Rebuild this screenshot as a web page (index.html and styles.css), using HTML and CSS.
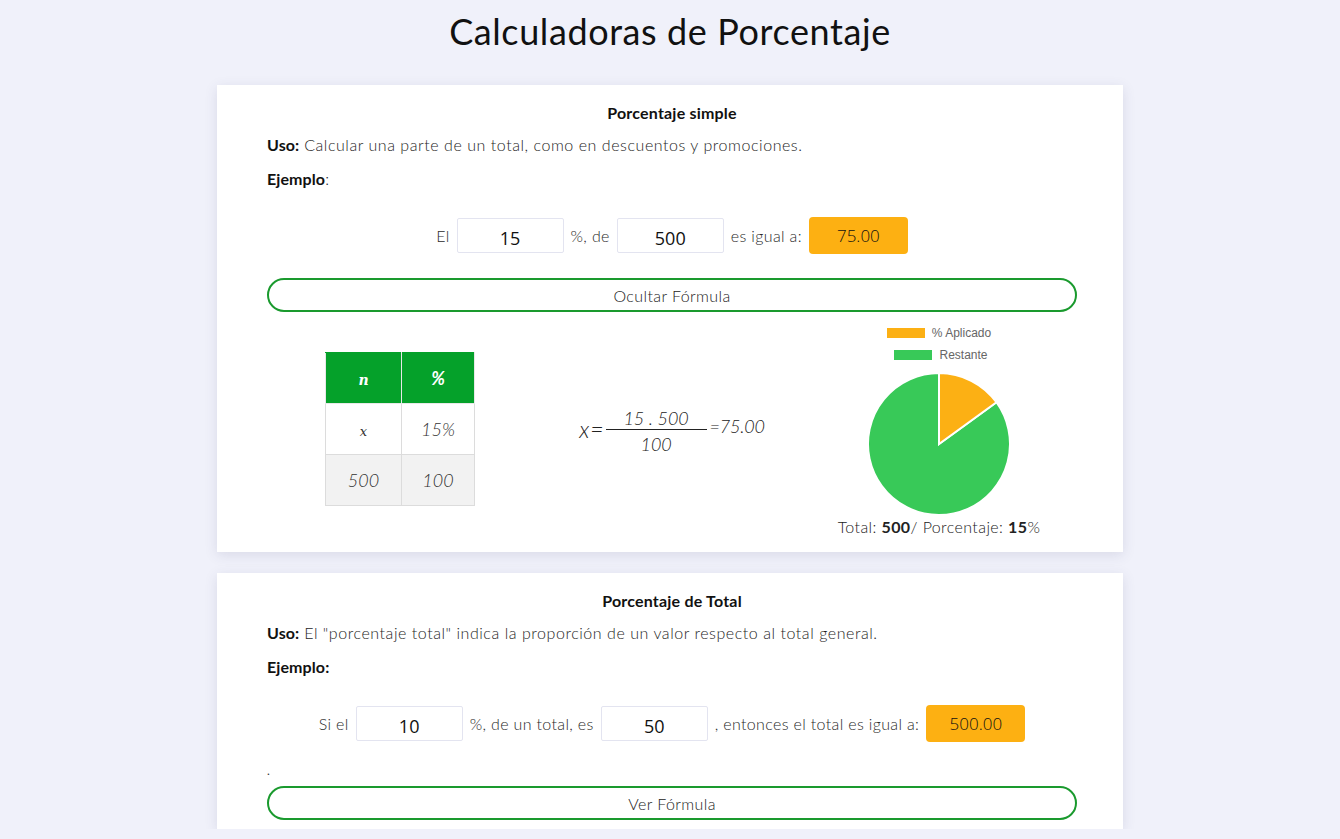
FILE: index.html
```html
<!DOCTYPE html>
<html lang="es">
<head>
<meta charset="utf-8">
<title>Calculadoras de Porcentaje</title>
<link rel="stylesheet" href="styles.css">
</head>
<body>
<h1 class="page-title">Calculadoras de Porcentaje</h1>

<section class="card card-first">
  <h2 class="card-title">Porcentaje simple</h2>
  <p class="line"><strong>Uso:</strong> Calcular una parte de un total, como en descuentos y promociones.</p>
  <p class="line line-ex"><strong>Ejemplo</strong>:</p>
  <div class="calc-row">
    <span>El</span>
    <input class="num" type="text" value="15">
    <span>%, de</span>
    <input class="num" type="text" value="500">
    <span>es igual a:</span>
    <span class="result">75.00</span>
  </div>
  <button class="toggle">Ocultar Fórmula</button>
  <div class="formula">
    <div class="col col-table">
      <table class="rule">
        <tr class="head"><th><span class="math-n">n</span></th><th>%</th></tr>
        <tr><td><span class="math-x">x</span></td><td>15%</td></tr>
        <tr class="alt"><td>500</td><td>100</td></tr>
      </table>
    </div>
    <div class="col col-eq">
      <div class="eq">
        <span class="eq-x">x=</span>
        <span class="frac"><span class="num-top">15 . 500</span><span class="den">100</span></span>
        <span class="eq-r">=75.00</span>
      </div>
    </div>
    <div class="col col-chart">
      <div class="legend">
        <div class="lg-item"><span class="sw sw-o"></span>% Aplicado</div>
        <div class="lg-item lg-2"><span class="sw sw-g"></span>Restante</div>
      </div>
      <svg class="pie" width="146" height="146" viewBox="-2 -2 146 146">
        <path d="M71 71 L128.44 29.27 A71 71 0 1 1 71 0 Z" fill="#38c958" stroke="#fff" stroke-width="2"/>
        <path d="M71 71 L71 0 A71 71 0 0 1 128.44 29.27 Z" fill="#fcb014" stroke="#fff" stroke-width="2"/>
      </svg>
      <p class="caption">Total: <b>500</b>/ Porcentaje: <b>15</b>%</p>
    </div>
  </div>
</section>

<section class="card card-second">
  <h2 class="card-title">Porcentaje de Total</h2>
  <p class="line"><strong>Uso:</strong> El "porcentaje total" indica la proporción de un valor respecto al total general.</p>
  <p class="line line-ex"><strong>Ejemplo:</strong></p>
  <div class="calc-row">
    <span>Si el</span>
    <input class="num" type="text" value="10">
    <span>%, de un total, es</span>
    <input class="num" type="text" value="50">
    <span>, entonces el total es igual a:</span>
    <span class="result">500.00</span>
  </div>
  <p class="dot">.</p>
  <button class="toggle toggle-2">Ver Fórmula</button>
</section>
</body>
</html>
```

FILE: styles.css
```css
* { box-sizing: border-box; }

body {
  margin: 0;
  background: #f0f1fa;
  font-family: "Lato", "Open Sans", sans-serif;
  color: #222;
}

.page-title {
  margin: 0;
  padding-top: 9px;
  height: 85px;
  text-align: center;
  font-size: 36px;
  font-weight: 400;
  line-height: 44px;
  color: #111;
  letter-spacing: 0.6px;
}

.card {
  width: 906px;
  margin: 0 auto;
  background: #fff;
  box-shadow: 0 3px 12px rgba(60, 60, 110, 0.13);
  padding: 18px 46px 15px 50px;
}

.card-second {
  margin-top: 21px;
  padding-bottom: 9px;
}

.card-title {
  margin: 0;
  text-align: center;
  font-size: 16px;
  line-height: 19px;
  font-weight: 700;
  color: #111;
  letter-spacing: 0.2px;
}

.line {
  margin: 13px 0 0;
  font-size: 16px;
  line-height: 20px;
  font-weight: 300;
  color: #1e1e1e;
  letter-spacing: 0.55px;
}

.line strong { font-weight: 700; color: #111; letter-spacing: 0.1px; }

.line-ex { margin-top: 14px; }

.calc-row {
  margin-top: 28px;
  display: flex;
  justify-content: center;
  align-items: center;
  gap: 6px;
  font-size: 16px;
  font-weight: 300;
  color: #2a2a2a;
  letter-spacing: 0.35px;
}

.num {
  width: 107px;
  height: 35px;
  border: 1px solid #e3e4f0;
  border-radius: 2px;
  text-align: center;
  font-family: "Open Sans", sans-serif;
  font-size: 18px;
  color: #111;
  padding: 4px 0 0;
  margin: 0 1px;
  outline: none;
  letter-spacing: 0;
}

.result {
  width: 99px;
  height: 37px;
  margin-left: 1px;
  background: #fdb012;
  border-radius: 4px;
  display: flex;
  align-items: center;
  justify-content: center;
  font-family: "Open Sans", sans-serif;
  font-size: 17px;
  color: #111;
  letter-spacing: 0;
}

.toggle {
  display: block;
  width: 810px;
  height: 34px;
  margin-top: 24px;
  border: 2px solid #1a9a2e;
  border-radius: 17px;
  background: #fff;
  font-family: "Lato", sans-serif;
  font-size: 16px;
  font-weight: 300;
  color: #222;
  padding: 0;
  letter-spacing: 0.4px;
}

.formula {
  margin-top: 10px;
  width: 810px;
  display: grid;
  grid-template-columns: 270px 270px 270px;
  align-items: center;
}

.col { display: flex; flex-direction: column; align-items: center; }

.rule {
  border-collapse: collapse;
  font-family: "Lato", sans-serif;
  font-style: italic;
  font-size: 18px;
  font-weight: 300;
  color: #333;
  margin-left: -4px;
  margin-bottom: 1px;
}

.rule th, .rule td {
  border: 1px solid #dcdcdc;
  height: 51px;
  text-align: center;
  padding: 0;
}

.rule th { width: 76px; }
.rule th + th { width: 73px; }

.rule .head th {
  background: #05a12a;
  color: #fff;
  font-weight: 700;
  border-color: #e8e8e8;
  border-top-color: #05a12a;
}

.rule .alt td { background: #f2f2f2; }

.math-n { font-family: "DejaVu Serif", serif; font-size: 14px; font-weight: 700; }
.math-x { font-family: "DejaVu Serif", serif; font-size: 13px; }

.eq {
  display: flex;
  align-items: flex-start;
  font-family: "Lato", sans-serif;
  font-style: italic;
  font-weight: 300;
  font-size: 18px;
  color: #222;
  margin-left: 0;
  margin-top: 7px;
}

.eq-x {
  font-size: 23px;
  line-height: 26px;
  margin-top: 8px;
  margin-right: 1px;
  letter-spacing: 1px;
}

.frac {
  display: flex;
  flex-direction: column;
  align-items: center;
  width: 101px;
}

.num-top {
  display: block;
  width: 100%;
  text-align: center;
  line-height: 20px;
  border-bottom: 1px solid #222;
  padding-bottom: 1px;
}

.den { line-height: 28px; }

.eq-r {
  font-size: 18px;
  line-height: 22px;
  margin-top: 7px;
  margin-left: 3px;
  letter-spacing: -0.2px;
}

.col-chart { padding-right: 6px; }

.legend {
  font-family: "Liberation Sans", Arial, sans-serif;
  font-size: 12px;
  color: #666;
  display: flex;
  flex-direction: column;
  align-items: center;
}

.lg-item { display: flex; align-items: center; height: 22px; }
.lg-item.lg-2 { margin-left: 4px; }

.sw { display: inline-block; width: 38px; height: 10px; margin-right: 7px; }
.sw-o { background: #fcb014; }
.sw-g { background: #38c958; }

.pie { display: block; margin-top: 5px; }

.caption {
  margin: 0;
  font-size: 16px;
  line-height: 20px;
  font-weight: 300;
  color: #222;
  letter-spacing: 0.4px;
}

.caption b { font-weight: 700; font-family: "Lato", sans-serif; }

.dot {
  margin: 19px 0 0;
  font-size: 12px;
  line-height: 20px;
  height: 20px;
  color: #333;
}

.toggle-2 { margin-top: 5px; }
```
